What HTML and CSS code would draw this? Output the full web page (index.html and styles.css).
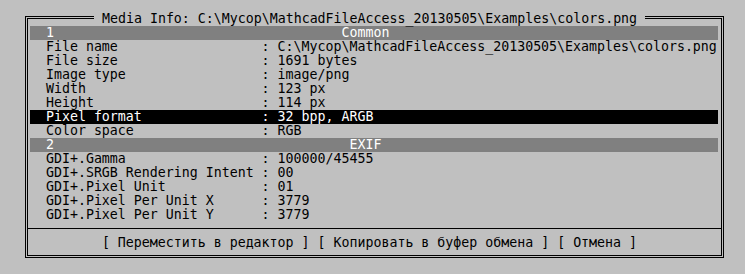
FILE: index.html
```html
<!DOCTYPE html>
<html lang="en">
<head>
  <meta charset="UTF-8" />
  <title>Media Info</title>
  <link rel="stylesheet" href="styles.css">
</head>
<body>
  <div class="dialog">
    <div class="title"> Media Info: C:\Mycop\MathcadFileAccess_20130505\Examples\colors.png </div>
    <div class="list">
      <div class="row group"><span class="num">1</span><span class="group-name">Common</span></div>
      <div class="row"><span class="key">File name</span><span class="val">: C:\Mycop\MathcadFileAccess_20130505\Examples\colors.png</span></div>
      <div class="row"><span class="key">File size</span><span class="val">: 1691 bytes</span></div>
      <div class="row"><span class="key">Image type</span><span class="val">: image/png</span></div>
      <div class="row"><span class="key">Width</span><span class="val">: 123 px</span></div>
      <div class="row"><span class="key">Height</span><span class="val">: 114 px</span></div>
      <div class="row selected"><span class="key">Pixel format</span><span class="val">: 32 bpp, ARGB</span></div>
      <div class="row"><span class="key">Color space</span><span class="val">: RGB</span></div>
      <div class="row group"><span class="num">2</span><span class="group-name exif">EXIF</span></div>
      <div class="row"><span class="key">GDI+.Gamma</span><span class="val">: 100000/45455</span></div>
      <div class="row"><span class="key">GDI+.SRGB Rendering Intent</span><span class="val">: 00</span></div>
      <div class="row"><span class="key">GDI+.Pixel Unit</span><span class="val">: 01</span></div>
      <div class="row"><span class="key">GDI+.Pixel Per Unit X</span><span class="val">: 3779</span></div>
      <div class="row"><span class="key">GDI+.Pixel Per Unit Y</span><span class="val">: 3779</span></div>
    </div>
    <div class="separator"></div>
    <div class="buttons"><span class="btn">[ Переместить в редактор ]</span> <span class="btn">[ Копировать в буфер обмена ]</span> <span class="btn">[ Отмена ]</span></div>
  </div>
</body>
</html>
```

FILE: styles.css
```css
body {
  margin: 0;
  background-color: #c0c0c0;
  color: #000;
  font-family: 'DejaVu Sans Mono', monospace;
  font-size: 13.288px;
  line-height: 14px;
}
.dialog {
  position: relative;
  box-sizing: border-box;
  width: 699px;
  height: 242px;
  margin: 16px 0 0 25px;
  border: 3px double #000;
  padding: 7px 2px 0 2px;
}
.title {
  position: absolute;
  top: -7px;
  left: 66px;
  height: 14px;
  background-color: #c0c0c0;
  white-space: pre;
}
.list {
  width: 688px;
}
.row {
  display: flex;
  height: 14px;
  white-space: pre;
}
.key {
  width: 27ch;
  padding-left: 2ch;
  flex: none;
}
.val {
  flex: none;
}
.group {
  background-color: #808080;
  color: #fff;
}
.group .num {
  width: 37ch;
  padding-left: 2ch;
  flex: none;
}
.group .exif {
  padding-left: 1ch;
}
.selected {
  background-color: #000;
  color: #fff;
}
.separator {
  margin: 6px -2px 0 -2px;
  border-top: 1px solid #000;
}
.buttons {
  margin-top: 7px;
  height: 14px;
  padding-left: 9ch;
  white-space: pre;
}
```
